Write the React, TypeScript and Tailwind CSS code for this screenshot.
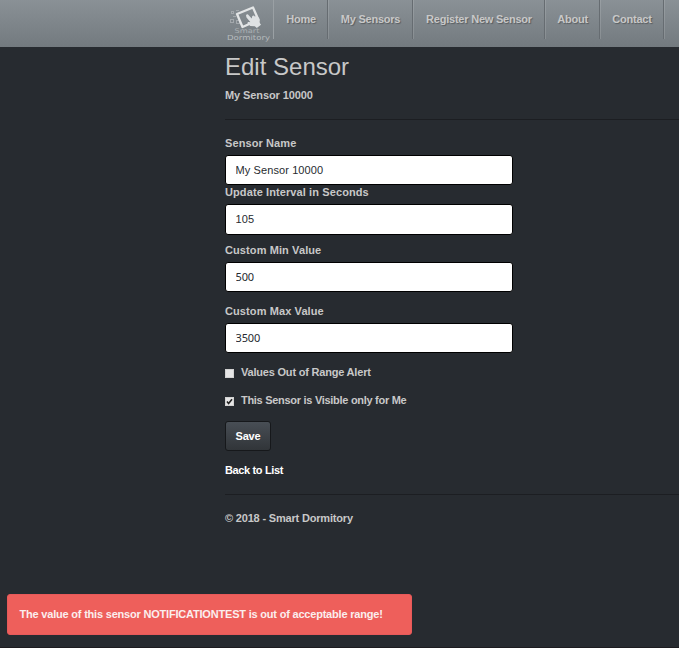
import React from "react";

type NavItem = { label: string; width: string };

const navItems: NavItem[] = [
  { label: "Home", width: "w-[54px]" },
  { label: "My Sensors", width: "w-[85px]" },
  { label: "Register New Sensor", width: "w-[132px]" },
  { label: "About", width: "w-[55px]" },
  { label: "Contact", width: "w-[64px]" },
];

function Logo() {
  return (
    <svg className="h-[42px] w-[48px] shrink-0" viewBox="0 0 48 42" fill="none">
      <g stroke="#a3a8ac" strokeWidth="1">
        <rect x="6.5" y="9.5" width="2" height="2" />
        <rect x="5.5" y="17.5" width="3" height="3" />
        <rect x="11.5" y="18.5" width="3" height="3" />
        <path d="M8 14.500h3M14 8.500h-3" />
      </g>
      <path d="M12 12 28 5.500 33.500 18 17.500 25Z" stroke="#e3e5e6" strokeWidth="2.300" strokeLinejoin="round" />
      <path d="M21 13.200c.8-1.200 1.900-1 2.700 0l3 3.300.5-2.300c.9-1 2.100-.7 2.500.4 1.100-.8 2.200-.4 2.500.8 1.100-.3 2 .3 2.200 1.500l.4 4.100 1.200 1.700-4.200 3.300-2-1.700-4.500-.2-2.800-2.700c-.1-1.200.8-1.700 2.200-1.200l1 .2-4.200-4.800Z" fill="#dfe2e4" />
      <g fontFamily="DejaVu Sans, sans-serif" fontWeight="400" letterSpacing="0">
        <text x="9.500" y="31.300" fill="#aaafb3" fontSize="6.500" textLength="25" lengthAdjust="spacingAndGlyphs">Smart</text>
        <text x="2" y="38" fill="#b6bbbe" fontSize="7" textLength="43" lengthAdjust="spacingAndGlyphs">Dormitory</text>
      </g>
    </svg>
  );
}

function Field({ label, value, className = "", box = "h-[30px]", font = "pb-px tracking-[0.1px]" }: { label: string; value: string; className?: string; box?: string; font?: string }) {
  return (
    <label className={`flex flex-col tracking-[0.1px] ${className}`}>
      <span className="h-[19px] leading-[14px]">{label}</span>
      <input
        defaultValue={value}
        className={`${box} w-[288px] rounded-[3px] border border-black bg-white px-[9.5px] text-[11px] font-normal text-[#272b30] outline-none ${font}`}
      />
    </label>
  );
}

function Check({ label, checked = false, tracking }: { label: string; checked?: boolean; tracking: string }) {
  return (
    <div className="flex h-[28px] items-start">
      <span className="mt-[4px] flex h-[9px] w-[9px] items-center justify-center border border-[#d2d2d2] bg-[#e6e6e6]">
        {checked && (
          <svg className="h-[9px] w-[9px] shrink-0" viewBox="0 0 9 9" fill="none">
            <path d="m2 4.500 1.600 2L7 2.200" stroke="#222" strokeWidth="1.600" />
          </svg>
        )}
      </span>
      <span className={`ml-[7px] leading-[14px] ${tracking}`}>{label}</span>
    </div>
  );
}

export default function App() {
  return (
    <div className="flex h-[648px] w-[679px] flex-col overflow-hidden border-b border-[#1d1c20] bg-[#272b30] font-['Liberation_Sans',Arial,sans-serif] text-[11px] font-bold text-[#c8c8c8]">
      <nav className="flex h-[47px] shrink-0 items-start bg-linear-to-b from-[#8a9196] to-[#737a7f] pl-[225px]">
        <div className="flex h-[39px] w-[49px] items-start border-r border-[#9aa0a4] pt-[2px]">
          <Logo />
        </div>
        {navItems.map((item) => (
          <a
            key={item.label}
            className={`${item.width} flex h-[39px] shrink-0 items-center justify-center border-r border-[#666c71] pl-px tracking-[-0.22px] whitespace-nowrap shadow-[1px_0_0_rgba(255,255,255,0.13)] [text-shadow:1px_1px_1px_rgba(0,0,0,0.3)]`}
          >
            {item.label}
          </a>
        ))}
      </nav>
      <main className="flex h-[547px] shrink-0 flex-col pl-[225px]">
        <h2 className="mt-[5px] h-[30px] text-[24px] leading-[30px] font-normal">Edit Sensor</h2>
        <h4 className="mt-[6px] h-[14px] leading-[14px] tracking-[-0.1px]">My Sensor 10000</h4>
        <hr className="mt-[17px] border-[#1c1e22]" />
        <form className="flex flex-col">
          <Field label="Sensor Name" value="My Sensor 10000" className="mt-[16px]" font="tracking-[0.1px]" />
          <Field label="Update Interval in Seconds" value="105" box="h-[31px]" font="pb-[2px]" />
          <Field label="Custom Min Value" value="500" className="mt-[8px]" font="font-['Noto_Sans',sans-serif] pb-[2px] tracking-[-0.15px]" />
          <Field label="Custom Max Value" value="3500" className="mt-[12px]" font="font-['Noto_Sans',sans-serif] pb-[2px] tracking-[-0.15px]" />
          <div className="mt-[12px] flex flex-col">
            <Check label="Values Out of Range Alert" tracking="tracking-[-0.2px]" />
            <Check label="This Sensor is Visible only for Me" tracking="tracking-[-0.29px]" checked />
          </div>
          <button type="button" className="h-[30px] w-[46px] rounded-[3px] border border-[#16181b] bg-linear-to-b from-[#484e55] to-[#313539] tracking-[-0.15px] text-white">
            Save
          </button>
        </form>
        <a className="mt-[12px] leading-[14px] tracking-[-0.36px] text-white">Back to List</a>
        <hr className="mt-[17px] border-[#1c1e22]" />
        <footer className="mt-[16px] leading-[14px] tracking-[-0.18px]">© 2018 - Smart Dormitory</footer>
      </main>
      <div className="ml-[7px] flex h-[41px] w-[405px] shrink-0 items-center rounded-[3px] border border-[#e8595a] bg-[#ee5f5b] pl-[11.5px] tracking-[-0.2px] text-[#fbeeee]">
        The value of this sensor NOTIFICATIONTEST is out of acceptable range!
      </div>
    </div>
  );
}
